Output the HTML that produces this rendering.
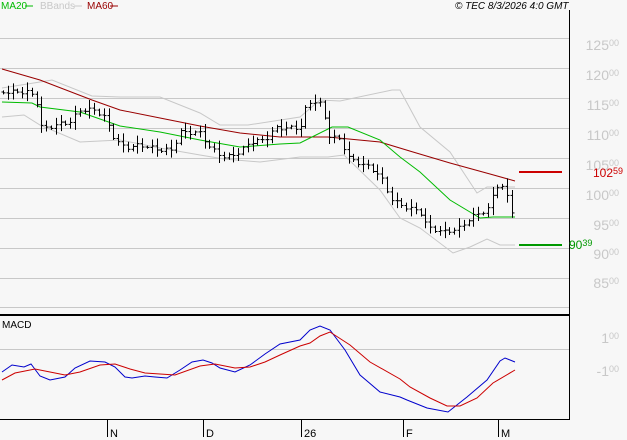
<!DOCTYPE html><html><head><style>
body{margin:0;background:#f7f7f7;width:627px;height:440px;overflow:hidden;font-family:"Liberation Sans",sans-serif}
svg{display:block}
</style></head><body>
<svg id="s" width="627" height="440" xmlns="http://www.w3.org/2000/svg" font-family="Liberation Sans, sans-serif">
<rect width="627" height="440" fill="#f7f7f7"/>
<g stroke="#c8c8c8" stroke-width="1">
<line x1="0" y1="38.5" x2="569" y2="38.5"/><line x1="0" y1="68.5" x2="569" y2="68.5"/>
<line x1="0" y1="98.5" x2="569" y2="98.5"/><line x1="0" y1="128.5" x2="569" y2="128.5"/>
<line x1="0" y1="158.5" x2="569" y2="158.5"/><line x1="0" y1="188.5" x2="569" y2="188.5"/>
<line x1="0" y1="218.5" x2="569" y2="218.5"/><line x1="0" y1="248.5" x2="569" y2="248.5"/>
<line x1="0" y1="278.5" x2="569" y2="278.5"/><line x1="0" y1="307.5" x2="569" y2="307.5"/>
<line x1="0" y1="349.5" x2="569" y2="349.5"/>
</g>
<line x1="569.5" y1="10" x2="569.5" y2="420" stroke="#000"/>
<line x1="0" y1="315" x2="570" y2="315" stroke="#000" stroke-width="2"/>
<line x1="0" y1="419.5" x2="570" y2="419.5" stroke="#000"/>
<g stroke="#000"><line x1="107.5" y1="419" x2="107.5" y2="437"/><line x1="203.5" y1="419" x2="203.5" y2="437"/><line x1="301.5" y1="419" x2="301.5" y2="437"/><line x1="403.5" y1="419" x2="403.5" y2="437"/><line x1="498.5" y1="419" x2="498.5" y2="437"/></g>
<g font-size="11" fill="#000"><text x="110" y="437">N</text><text x="206" y="437">D</text><text x="304" y="437">26</text><text x="406" y="437">F</text><text x="501" y="437">M</text></g>
<g fill="#c8c8c8" font-size="14" text-anchor="end">
<text x="619" y="50">125<tspan font-size="9" dy="-4">00</tspan></text>
<text x="619" y="80">120<tspan font-size="9" dy="-4">00</tspan></text>
<text x="619" y="110">115<tspan font-size="9" dy="-4">00</tspan></text>
<text x="619" y="140">110<tspan font-size="9" dy="-4">00</tspan></text>
<text x="619" y="170">105<tspan font-size="9" dy="-4">00</tspan></text>
<text x="619" y="200">100<tspan font-size="9" dy="-4">00</tspan></text>
<text x="619" y="230">95<tspan font-size="9" dy="-4">00</tspan></text>
<text x="619" y="259">90<tspan font-size="9" dy="-4">00</tspan></text>
<text x="619" y="288">85<tspan font-size="9" dy="-4">00</tspan></text>
<text x="619" y="343">1<tspan font-size="9" dy="-4">00</tspan></text>
<text x="619" y="376">-1<tspan font-size="9" dy="-4">00</tspan></text>
</g>
<text x="593" y="177" fill="#cc0000" font-size="12">102<tspan font-size="9" dy="-3">59</tspan></text>
<text x="569" y="249" fill="#009900" font-size="12">90<tspan font-size="9" dy="-3">39</tspan></text>
<line x1="519" y1="172" x2="562" y2="172" stroke="#cc0000" stroke-width="2"/>
<line x1="519" y1="245" x2="562" y2="245" stroke="#009900" stroke-width="2"/>
<g fill="none" stroke-width="1">
<polyline stroke="#c8c8c8" points="2,88 40,82 52,80 92,96 120,97 160,97 200,113 220,125 248,125 300,117 320,100 340,101 392,90 400,90 420,127 450,152 477,193 487,187 515,187"/>
<polyline stroke="#c8c8c8" points="2,117 24,115 40,125 80,142 120,140 160,148 200,155 224,159 260,162 300,157 328,157 344,155 380,190 400,218 420,228 453,253 470,247 487,239 500,245 515,245"/>
<polyline stroke="#990000" points="2,69 40,80 92,100 120,110 160,118 200,126 240,133 280,137 328,137 380,142 413,152 450,163 490,174 515,181"/>
<polyline stroke="#00bb00" points="2,102 32,103 40,107 80,112 120,126 160,132 200,140 240,147 280,144 300,143 332,127 348,127 380,140 400,157 420,172 450,200 480,218 493,217 515,217"/>
<polyline stroke="#0000cc" points="2,372 12,365 24,367 31,364 40,376 50,380 65,377 75,368 90,361 105,362 115,367 125,377 132,378 145,376 155,377 167,378 180,370 192,362 203,360 212,363 220,368 235,372 250,365 265,354 280,344 300,340 310,330 320,326 330,330 345,350 360,375 380,392 400,397 407,400 427,408 448,412 467,397 487,380 500,361 505,358 515,362"/>
<polyline stroke="#cc0000" points="2,380 15,373 35,369 50,372 65,375 80,372 100,365 115,364 130,369 145,373 175,375 200,366 215,364 235,368 250,367 265,362 280,355 300,346 310,343 320,336 330,332 350,345 370,362 400,379 410,387 430,398 447,406 460,406 477,398 493,383 515,370"/>
</g>
<g id="bars" stroke="#000" stroke-width="1"></g>
<text x="2" y="328" font-size="10" fill="#000">MACD</text>
<g font-size="10"><text x="1" y="9" fill="#00bb00">MA20</text><line x1="25" y1="6" x2="33" y2="6" stroke="#00bb00"/>
<text x="40" y="9" fill="#c8c8c8">BBands</text><line x1="74" y1="6" x2="82" y2="6" stroke="#c8c8c8"/>
<text x="87" y="9" fill="#990000">MA60</text><line x1="110" y1="6" x2="118" y2="6" stroke="#990000"/></g>
<text x="455" y="9" font-size="10" font-style="italic" fill="#000">© TEC 8/3/2026 4:0 GMT</text>
</svg>
<script>
var k=[[2,92],[30,92],[38,105],[42,130],[55,125],[70,122],[80,110],[95,110],[105,118],[115,140],[125,148],[140,145],[160,150],[172,150],[180,132],[200,133],[210,148],[225,158],[240,152],[250,142],[265,140],[275,128],[300,128],[305,110],[312,100],[322,105],[328,135],[340,140],[350,160],[365,165],[380,175],[390,198],[400,205],[420,212],[428,228],[445,232],[460,228],[470,218],[490,208],[495,185],[505,188],[510,210],[515,213]];
function f(x){for(var i=1;i<k.length;i++)if(x<=k[i][0]){var a=k[i-1],b=k[i];return a[1]+(b[1]-a[1])*(x-a[0])/(b[0]-a[0]);}return k[k.length-1][1];}
var g=document.getElementById('bars'),h='',prev=f(2);
for(var x=3;x<=515;x+=4.8){var xi=Math.round(x)+0.5,c=f(x)+Math.sin(x*0.9)*2,o=prev,s=(Math.sin(x*1.7)+1.4)*3.5;
var hi=Math.min(o,c)-s,lo=Math.max(o,c)+s*0.9;
h+='<line x1="'+xi+'" y1="'+hi+'" x2="'+xi+'" y2="'+lo+'"/><line x1="'+(xi-2)+'" y1="'+o+'" x2="'+xi+'" y2="'+o+'"/><line x1="'+xi+'" y1="'+c+'" x2="'+(xi+2)+'" y2="'+c+'"/>';prev=c;}
g.innerHTML=h;
</script>
</body></html>
